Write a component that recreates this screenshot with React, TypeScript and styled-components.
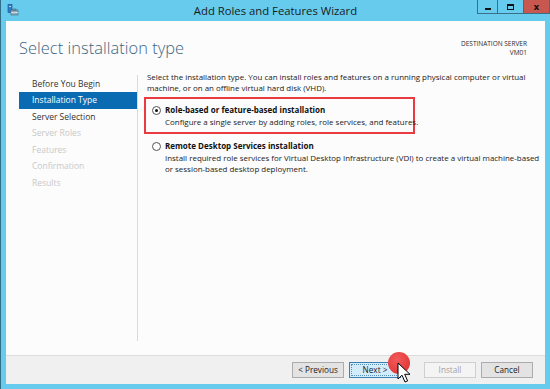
import React from "react";
import styled, { createGlobalStyle } from "styled-components";

const Global = createGlobalStyle`
  html, body { margin: 0; padding: 0; }
  body { width: 550px; height: 389px; overflow: hidden; font-family: "Open Sans", "Noto Sans", Arial, sans-serif; }
`;

const Frame = styled.div`
  width: 550px;
  height: 389px;
  box-sizing: border-box;
  background: #66cbec;
  border-left: 1px solid #2f6e86;
  padding: 0 5px 5px 5px;
  display: flex;
  flex-direction: column;
  position: relative;
  overflow: hidden;
`;

const TitleBar = styled.div`
  height: 21px;
  display: flex;
  align-items: center;
  position: relative;
`;

const AppIcon = styled.svg`
  width: 12px;
  height: 12px;
  margin-left: 1px;
  margin-top: -1px;
`;

const TitleText = styled.div`
  position: absolute;
  left: 0;
  right: 0;
  top: 3px;
  text-align: center;
  font-size: 11.3px;
  color: #1b1b1b;
`;

const WinButtons = styled.div`
  position: absolute;
  right: -5px;
  top: 0;
  display: flex;
`;

const WinBtn = styled.div<{ $close?: boolean; $w: number }>`
  width: ${(p) => p.$w}px;
  height: 14px;
  box-sizing: border-box;
  background: ${(p) => (p.$close ? "#c7574f" : "#66cbec")};
  border: 1px solid #3a6f86;
  border-top: none;
  margin-left: -1px;
  display: flex;
  align-items: center;
  justify-content: center;
  color: #111;
  font-size: 9px;
  font-weight: 700;
  font-family: "DejaVu Sans", sans-serif;
`;

const MinGlyph = styled.div`
  width: 6px;
  height: 2px;
  background: #111;
  margin-top: 4px;
`;

const MaxGlyph = styled.div`
  width: 5px;
  height: 3px;
  border: 1.5px solid #111;
  border-top-width: 2px;
`;

const Client = styled.div`
  flex: 1;
  background: #fcfcfc;
  display: flex;
  flex-direction: column;
`;

const Header = styled.div`
  height: 51px;
  display: flex;
  justify-content: space-between;
  align-items: flex-start;
  padding: 0 18px 0 13px;
`;

const Heading = styled.h1`
  margin: 15px 0 0 0;
  font-size: 16.4px;
  font-weight: 300;
  color: #3b6682;
  letter-spacing: 0.05px;
`;

const Dest = styled.div`
  margin-top: 18px;
  text-align: right;
  font-size: 6.5px;
  line-height: 9px;
  color: #2a2a2a;
`;

const Body = styled.div`
  flex: 1;
  display: flex;
  padding-left: 13px;
`;

const Nav = styled.div`
  width: 118px;
  padding-top: 3.5px;
  display: flex;
  flex-direction: column;
`;

const NavItem = styled.div<{ $state: "done" | "active" | "off" }>`
  height: 16.5px;
  line-height: 16.5px;
  padding-left: 13px;
  font-size: 8.5px;
  background: ${(p) => (p.$state === "active" ? "#0a6bb2" : "transparent")};
  color: ${(p) =>
    p.$state === "active" ? "#ffffff" : p.$state === "done" ? "#333333" : "#c8c8c8"};
`;

const Divider = styled.div`
  width: 1px;
  background: #dadada;
  margin-top: 3px;
  margin-bottom: 14px;
`;

const Content = styled.div`
  flex: 1;
  padding: 0 0 0 9px;
  font-size: 7.95px;
  line-height: 11px;
  color: #222;
`;

const Intro = styled.p`
  margin: 0;
  white-space: nowrap;
`;

const Option = styled.div<{ $highlight?: boolean }>`
  width: 271px;
  box-sizing: border-box;
  margin-left: -3px;
  margin-top: ${(p) => (p.$highlight ? "3px" : "-1px")};
  padding: 5px 0 4px 6px;
  border: 2px solid ${(p) => (p.$highlight ? "#ea3b43" : "transparent")};
  display: grid;
  grid-template-columns: 13px 1fr;
  row-gap: 2px;
`;

const Radio = styled.span<{ $checked?: boolean }>`
  width: 7px;
  height: 7px;
  border-radius: 50%;
  border: 1px solid #555;
  background: #fff;
  box-sizing: content-box;
  margin-top: 2px;
  display: flex;
  align-items: center;
  justify-content: center;
  &::after {
    content: "";
    width: 3px;
    height: 3px;
    border-radius: 50%;
    background: ${(p) => (p.$checked ? "#111" : "transparent")};
  }
`;

const OptTitle = styled.div`
  font-weight: 700;
  font-size: 8px;
  color: #111;
`;

const OptDesc = styled.div`
  grid-column: 2;
  white-space: nowrap;
`;

const Footer = styled.div`
  height: 29px;
  box-sizing: border-box;
  border-top: 1px solid #dcdcdc;
  background: #f0f0f0;
  display: flex;
  align-items: center;
  justify-content: flex-end;
  padding-right: 12px;
  padding-bottom: 1px;
`;

const Btn = styled.div<{ $variant?: "default" | "focus" | "disabled"; $gap?: number }>`
  width: 52px;
  height: 16px;
  box-sizing: border-box;
  margin-left: ${(p) => p.$gap ?? 5}px;
  font-size: 8.2px;
  display: flex;
  align-items: center;
  justify-content: center;
  border: 1px solid
    ${(p) => (p.$variant === "focus" ? "#3c7fb1" : p.$variant === "disabled" ? "#cfcfcf" : "#acacac")};
  background: ${(p) =>
    p.$variant === "focus" ? "#d2ecfb" : p.$variant === "disabled" ? "#f4f4f4" : "#e3e3e3"};
  color: ${(p) => (p.$variant === "disabled" ? "#a3a3a3" : "#222")};
  outline: ${(p) => (p.$variant === "focus" ? "1px dotted #5a8fb8" : "none")};
  outline-offset: -3px;
`;

const ClickDot = styled.div`
  position: absolute;
  left: 387px;
  top: 352px;
  width: 22px;
  height: 22px;
  border-radius: 50%;
  background: radial-gradient(circle at 40% 35%, #f35a5a, #e23b3b 70%, #d33535);
`;

const Cursor = styled.svg`
  position: absolute;
  left: 396px;
  top: 362px;
  width: 14px;
  height: 22px;
`;

export default function App() {
  return (
    <>
      <Global />
      <Frame>
        <TitleBar>
          <AppIcon viewBox="0 0 12 12">
            <rect x="1" y="0.5" width="4" height="8" fill="#2f7fc7" stroke="#1b4f80" strokeWidth="0.6" />
            <rect x="2" y="2" width="2" height="0.8" fill="#cfe6f8" />
            <rect x="4" y="6" width="7" height="5" fill="#8fa9bd" stroke="#4a6578" strokeWidth="0.6" />
            <rect x="6" y="5" width="3" height="1.2" fill="none" stroke="#4a6578" strokeWidth="0.6" />
            <rect x="4" y="8" width="7" height="0.8" fill="#dfe9f1" />
          </AppIcon>
          <TitleText>Add Roles and Features Wizard</TitleText>
          <WinButtons>
            <WinBtn $w={21}>
              <MinGlyph />
            </WinBtn>
            <WinBtn $w={27}>
              <MaxGlyph />
            </WinBtn>
            <WinBtn $w={27} $close>
              x
            </WinBtn>
          </WinButtons>
        </TitleBar>
        <Client>
          <Header>
            <Heading>Select installation type</Heading>
            <Dest>
              DESTINATION SERVER
              <br />
              VM01
            </Dest>
          </Header>
          <Body>
            <Nav>
              <NavItem $state="done">Before You Begin</NavItem>
              <NavItem $state="active">Installation Type</NavItem>
              <NavItem $state="done">Server Selection</NavItem>
              <NavItem $state="off">Server Roles</NavItem>
              <NavItem $state="off">Features</NavItem>
              <NavItem $state="off">Confirmation</NavItem>
              <NavItem $state="off">Results</NavItem>
            </Nav>
            <Divider />
            <Content>
              <Intro>
                Select the installation type. You can install roles and features on a running physical computer or virtual
                <br />
                machine, or on an offline virtual hard disk (VHD).
              </Intro>
              <Option $highlight>
                <Radio $checked />
                <OptTitle>Role-based or feature-based installation</OptTitle>
                <OptDesc>Configure a single server by adding roles, role services, and features.</OptDesc>
              </Option>
              <Option>
                <Radio />
                <OptTitle>Remote Desktop Services installation</OptTitle>
                <OptDesc>
                  Install required role services for Virtual Desktop Infrastructure (VDI) to create a virtual machine-based
                  <br />
                  or session-based desktop deployment.
                </OptDesc>
              </Option>
            </Content>
          </Body>
          <Footer>
            <Btn>&lt; Previous</Btn>
            <Btn $variant="focus">Next &gt;</Btn>
            <Btn $variant="disabled" $gap={23}>
              Install
            </Btn>
            <Btn>Cancel</Btn>
          </Footer>
        </Client>
        <ClickDot />
        <Cursor viewBox="0 0 14 22">
          <path
            d="M1 1 L1 17 L5 13.2 L8 20 L10.6 18.9 L7.7 12.3 L13 12.3 Z"
            fill="#fff"
            stroke="#000"
            strokeWidth="1"
            strokeLinejoin="round"
          />
        </Cursor>
      </Frame>
    </>
  );
}
